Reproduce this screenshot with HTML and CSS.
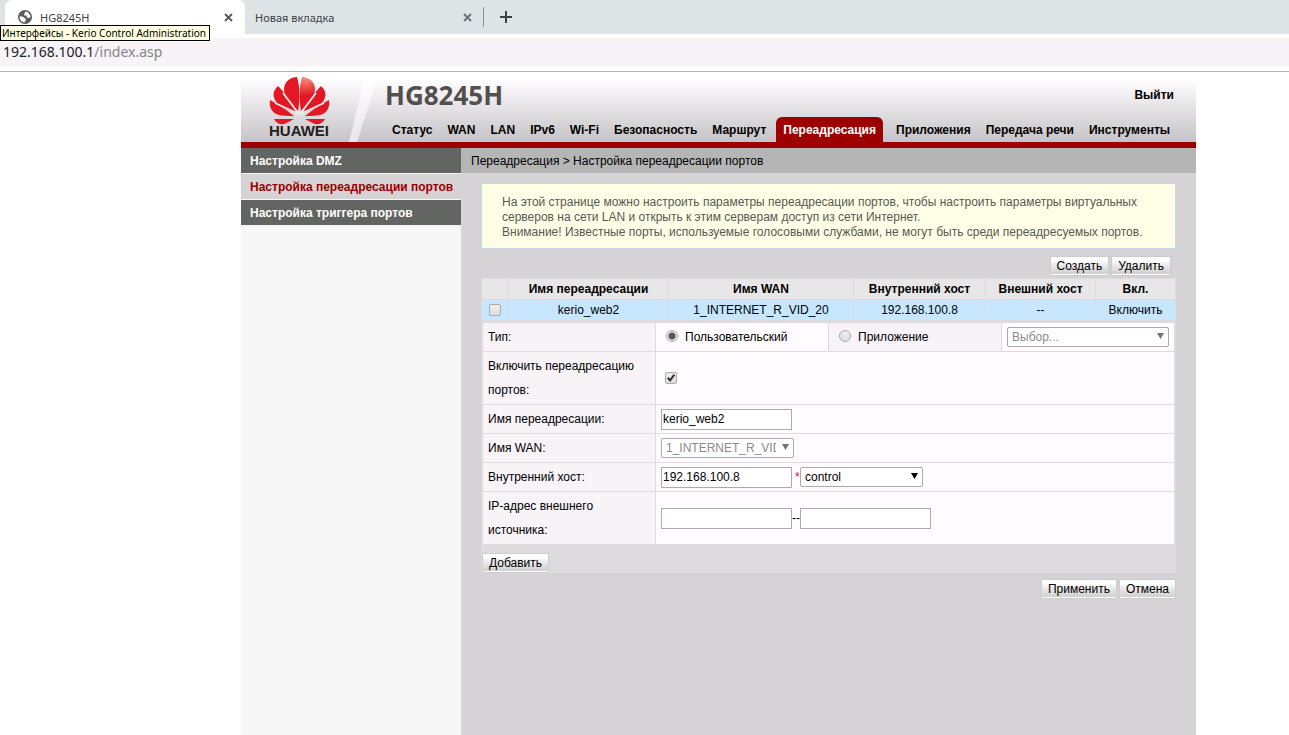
FILE: index.html
```
<!DOCTYPE html>
<html lang="ru">
<head>
<meta charset="utf-8">
<title>HG8245H</title>
<link rel="stylesheet" href="styles.css">
</head>
<body>
<header class="browser">
  <div class="tabs">
    <div class="tab tab-active">
      <svg class="globe" viewBox="0 0 14 14" aria-hidden="true"><circle cx="7" cy="7" r="7" fill="#5a5e63"/><path d="M1.500 6.500 4.500 6.500 6.500 8 8 9 7.500 10.500 6.500 12.500C3.500 12 1.500 10 1.500 6.500ZM7.500 1.500C10 1.800 12.300 4 12.500 7L11 8 9 7.500 8.500 5.500 6 5.500 6.500 3.500Z" fill="#fff"/></svg>
      <span class="tab-title">HG8245H</span>
      <button class="tab-close" type="button" aria-label="Закрыть"><svg viewBox="0 0 9 9"><path d="M1 1 8 8M8 1 1 8" stroke="#54585c" stroke-width="1.800"/></svg></button>
    </div>
    <div class="tab tab-next">
      <span class="tab-title">Новая вкладка</span>
      <button class="tab-close" type="button" aria-label="Закрыть"><svg viewBox="0 0 9 9"><path d="M1 1 8 8M8 1 1 8" stroke="#6b6f73" stroke-width="1.800"/></svg></button>
    </div>
    <button class="tab-new" type="button" aria-label="Новая вкладка"><svg viewBox="0 0 12 12"><path d="M6 0V12M0 6H12" stroke="#3c4043" stroke-width="2"/></svg></button>
  </div>
  <div class="address">192.168.100.1<span class="path">/index.asp</span></div>
  <div class="tooltip" role="tooltip">Интерфейсы - Kerio Control Administration</div>
</header>

<div class="router">
  <div class="banner">
    <svg class="logo" viewBox="0 0 134 64" role="img" aria-label="HUAWEI">
      <defs>
        <radialGradient id="petal" gradientUnits="userSpaceOnUse" cx="65" cy="-2" r="20">
          <stop offset="0" stop-color="#f4a090"/><stop offset="0.500" stop-color="#ec5a50"/><stop offset="1" stop-color="#e31824"/>
        </radialGradient>
        <linearGradient id="slash" x1="0" y1="0" x2="0" y2="1">
          <stop offset="0" stop-color="#fff"/><stop offset="1" stop-color="#e8e6e8"/>
        </linearGradient>
      </defs>
      <path d="M123 2H136L116 64H108Z" fill="url(#slash)"/>
      <g>
        <g fill="#e31824">
          <path d="M57 33C59 23 59 8 56 -1C49 -1 43 4 43 11C43 19 50 27 57 33Z"/>
          <path d="M55 35C51 25 44 15 37 8C33 12 31 16 34 22C37 28 46 32 55 35Z"/>
          <path d="M53 38C46 32 38 27 29 22C28 28 30 33 35 36C40 38 47 38 53 38Z"/>
          <path d="M53 41H33C35 45 39 47 43 46C47 44 50 43 53 41Z"/>
        </g>
        <g fill="url(#petal)">
          <path d="M60 33C58 23 58 8 61 -1C68 -1 74 4 74 11C74 19 67 27 60 33Z"/>
          <path d="M62 35C66 25 73 15 80 8C84 12 86 16 83 22C80 28 71 32 62 35Z"/>
          <path d="M64 38C71 32 79 27 88 22C89 28 87 33 82 36C77 38 70 38 64 38Z"/>
          <path d="M64 41H84C82 45 78 47 74 46C70 44 67 43 64 41Z"/>
        </g>
        <path d="M58 36 42 15M58 36 34 25M59 36 75 15M59 36 83 25" stroke="#eeecee" stroke-width="1.800" fill="none"/>
      </g>
      <text x="28" y="58" class="logo-text">HUAWEI</text>
    </svg>
    <div class="banner-main">
      <div class="banner-top">
        <h1 class="model">HG8245H</h1>
        <a class="logout" href="#">Выйти</a>
      </div>
      <nav class="nav">
        <a href="#">Статус</a><a href="#">WAN</a><a href="#">LAN</a><a href="#">IPv6</a><a href="#">Wi-Fi</a><a href="#">Безопасность</a><a href="#">Маршрут</a><a class="current" href="#">Переадресация</a><a href="#">Приложения</a><a href="#">Передача речи</a><a href="#">Инструменты</a>
      </nav>
    </div>
  </div>

  <div class="body">
    <nav class="side">
      <a href="#">Настройка DMZ</a>
      <a class="selected" href="#">Настройка переадресации портов</a>
      <a href="#">Настройка триггера портов</a>
    </nav>
    <main class="main">
      <div class="crumbs">Переадресация &gt; Настройка переадресации портов</div>
      <form class="content">
        <p class="note">На этой странице можно настроить параметры переадресации портов, чтобы настроить параметры виртуальных серверов на сети LAN и открыть к этим серверам доступ из сети Интернет.<br>Внимание! Известные порты, используемые голосовыми службами, не могут быть среди переадресуемых портов.</p>
        <div class="actions actions-top">
          <button class="btn" type="button">Создать</button>
          <button class="btn" type="button">Удалить</button>
        </div>
        <table class="list">
          <colgroup><col class="c-check"><col class="c-name"><col class="c-wan"><col class="c-in"><col class="c-out"><col></colgroup>
          <thead><tr><th></th><th>Имя переадресации</th><th>Имя WAN</th><th>Внутренний хост</th><th>Внешний хост</th><th>Вкл.</th></tr></thead>
          <tbody><tr><td><input class="check" type="checkbox" aria-label="kerio_web2"></td><td>kerio_web2</td><td>1_INTERNET_R_VID_20</td><td>192.168.100.8</td><td>--</td><td>Включить</td></tr></tbody>
        </table>
        <div class="config">
          <table class="fields">
            <tbody>
              <tr>
                <th scope="row">Тип:</th>
                <td><label class="choice"><input class="radio" type="radio" name="type" checked>Пользовательский</label></td>
                <td class="tint"><label class="choice"><input class="radio" type="radio" name="type">Приложение</label></td>
                <td><span class="select select-wide off"><select disabled aria-label="Приложение"><option>Выбор...</option></select><svg viewBox="0 0 8 6"><path d="M0 0H7L3.500 6Z"/></svg></span></td>
              </tr>
              <tr>
                <th scope="row"><label for="enable">Включить переадресацию портов:</label></th>
                <td class="inset" colspan="3"><input id="enable" class="check" type="checkbox" checked></td>
              </tr>
              <tr>
                <th scope="row"><label for="name">Имя переадресации:</label></th>
                <td colspan="3"><input id="name" class="text" type="text" value="kerio_web2"></td>
              </tr>
              <tr>
                <th scope="row"><label for="wan">Имя WAN:</label></th>
                <td colspan="3"><span class="select select-wan off"><select id="wan" disabled><option>1_INTERNET_R_VID_20</option></select><svg viewBox="0 0 8 6"><path d="M0 0H7L3.500 6Z"/></svg></span></td>
              </tr>
              <tr>
                <th scope="row"><label for="host">Внутренний хост:</label></th>
                <td colspan="3"><div class="pair"><input id="host" class="text" type="text" value="192.168.100.8"><span class="star">*</span><span class="select select-host"><select aria-label="Хост"><option>control</option></select><svg viewBox="0 0 8 6"><path d="M0 0H7L3.500 6Z"/></svg></span></div></td>
              </tr>
              <tr>
                <th scope="row"><label for="from">IP-адрес внешнего источника:</label></th>
                <td colspan="3"><div class="pair"><input id="from" class="text" type="text"><span class="dash">--</span><input class="text" type="text" aria-label="Конечный IP-адрес"></div></td>
              </tr>
            </tbody>
          </table>
          <button class="btn btn-add" type="button">Добавить</button>
        </div>
        <div class="actions actions-bottom">
          <button class="btn" type="submit">Применить</button>
          <button class="btn" type="reset">Отмена</button>
        </div>
      </form>
    </main>
  </div>
</div>
</body>
</html>
```

FILE: styles.css
```
* { box-sizing: border-box; }
body {
  margin: 0;
  min-height: 100vh;
  display: flex;
  flex-direction: column;
  background: #fff;
  color: #000;
  font: 12px/15px "Liberation Sans", Arial, sans-serif;
}
a { color: inherit; text-decoration: none; }
button { font: inherit; cursor: pointer; }

/* Browser chrome */
.browser {
  position: relative;
  border-bottom: 1px solid #b3b1b3;
  font-family: "Noto Sans", "Open Sans", sans-serif;
}
.tabs { display: flex; height: 38px; padding-bottom: 4px; background: linear-gradient(#dee3e6 34px, #fff 34px); }
.tab { display: flex; align-items: center; font-size: 11px; color: #3f4245; }
.tab-active { width: 240px; margin: 0 0 -4px 5px; padding: 0 12px 4px 13px; border-radius: 7px 7px 0 0; background: #fff; }
.tab-next { width: 239px; padding: 0 11px 0 10px; border-bottom-left-radius: 8px; background: #dee3e6; position: relative; }
.tab-next::after { content: ""; position: absolute; right: 0; top: 7px; width: 1px; height: 20px; background: #8e9194; }
.globe { width: 14px; height: 14px; margin-right: 8px; }
.tab-title { flex: 1; }
.tab-close, .tab-new { border: 0; padding: 0; background: none; display: flex; align-items: center; }
.tab-close svg { width: 9px; height: 9px; }
.tab-next .tab-close { margin-right: 1px; }
.tab-new { margin-left: 16px; }
.tab-new svg { width: 12px; height: 12px; }
.address {
  height: 33px;
  padding-left: 3px;
  background: linear-gradient(#f7f3f7 28px, #fff 28px);
  color: #202124;
  font-size: 14px;
  line-height: 28px;
}
.path { color: #85858a; }
.tooltip {
  position: absolute;
  left: 0;
  top: 25px;
  padding: 0 3px 0 1px;
  border: 1px solid #000;
  background: #ffffe1;
  color: #000;
  font-size: 10px;
  line-height: 14px;
  white-space: nowrap;
}

/* Router page */
.router { flex: 1; display: flex; flex-direction: column; margin: 6px 93px 0 241px; }
.banner {
  display: flex;
  height: 70px;
  border-bottom: 6px solid #9c0000;
  background: linear-gradient(#fff, #fcfafc 5px, #c5c3c5);
}
.logo { width: 134px; height: 64px; flex: none; overflow: visible; }
.logo-text { font: bold 15px "Liberation Sans", Arial, sans-serif; fill: #231f20; }
.banner-main { flex: 1; display: flex; flex-direction: column; justify-content: space-between; }
.banner-top { display: flex; justify-content: space-between; padding: 0 22px 0 10px; }
.model { margin: 0; color: #524f4f; font: bold 26px/34px "Noto Sans", "Open Sans", sans-serif; }
.logout { padding-top: 10px; font-weight: bold; }
.nav { display: flex; gap: 1px; padding-left: 10px; font-weight: bold; white-space: nowrap; }
.nav a { padding: 2px 7px 0; line-height: 23px; }
.nav a.current { margin: 0 5px 0 2px; border-radius: 6px 6px 0 0; background: #9c0000; color: #fff; }

.body { flex: 1; display: flex; }
.side { width: 220px; background: #f7f7f7; }
.side a {
  display: block;
  height: 26px;
  padding: 2px 0 0 9px;
  border-bottom: 1px solid #f7f7f7;
  background: #636562;
  color: #fff;
  font-weight: bold;
  line-height: 23px;
}
.side a.selected { background: #d6d3d6; color: #9c0000; }
.main { flex: 1; background: #d6d3d6; }
.crumbs { padding: 2px 0 0 10px; background: #b5b5b5; line-height: 23px; }
.content { padding: 10px 20px 0; }
.note { margin: 0; padding: 11px 19px 8px 20px; border: 1px solid #c6dbe7; background: #ffffe7; color: #5a5952; }
.actions { display: flex; justify-content: flex-end; gap: 2px; }
.actions-top { padding: 7px 5px 2px; }
.actions-bottom { padding-top: 5px; }
.btn {
  height: 20px;
  padding: 1px 6px 0;
  border: 1px solid #cecbce;
  background: linear-gradient(#fff 4px, #f2f2f2 6px, #cfcfcf 17px, #fff 17px);
  color: #000;
  line-height: 17px;
}
.btn-add { display: block; margin: 8px 0 1px; }

.list { width: 100%; border-collapse: collapse; table-layout: fixed; text-align: center; background: #e7e7e7; }
.list th, .list td { height: 21px; padding: 0; border: 1px solid #dedbde; }
.list tbody { background: #c6e7ff; }
.list .check { display: block; margin: 0 auto; }
.c-check { width: 27px; }
.c-name { width: 160px; }
.c-wan { width: 185px; }
.c-in { width: 132px; }
.c-out { width: 110px; }

.config { padding: 1px 1px 0; background: #dedbde; }
.fields { width: 100%; border-collapse: collapse; table-layout: fixed; background: #fffbff; }
.fields th, .fields td { height: 29px; padding: 0 5px; border: 1px solid #dedbde; text-align: left; font-weight: normal; }
.fields th, .fields .tint { background: #f7f3f7; }
.fields th { line-height: 24px; padding-top: 2px; padding-bottom: 2px; }
.fields .inset { padding-left: 9px; }
.choice { display: flex; gap: 7px; padding-left: 5px; }
.pair { display: flex; align-items: center; }

.check, .radio { appearance: none; margin: 0; width: 12px; height: 12px; border: 1px solid #aaa; background: linear-gradient(#eee, #ddd); }
.check { display: block; border-radius: 2px; }
.check:checked::before {
  content: "";
  display: block;
  width: 10px;
  height: 10px;
  background: #333;
  clip-path: polygon(10% 55%, 25% 40%, 40% 58%, 75% 10%, 92% 22%, 42% 90%);
}
.radio { flex: none; border-radius: 50%; }
.radio:checked { background: radial-gradient(circle, #555 3px, #e6e6e6 4px); }
.text { display: block; width: 131px; height: 21px; padding: 0 1px; border: 1px solid #adaaad; background: #fff; font: inherit; }
.select { position: relative; display: block; height: 20px; }
.select select {
  appearance: none;
  display: block;
  width: 100%;
  height: 100%;
  padding: 0 17px 0 4px;
  border: 1px solid #adaaad;
  border-radius: 2px;
  background: #fff;
  color: #000;
  font: inherit;
  opacity: 1;
}
.select svg { position: absolute; right: 4px; top: 6px; width: 8px; height: 6px; pointer-events: none; }
.off select { color: #8c8a8c; }
.off svg { fill: #737373; }
.select-wan { width: 133px; }
.select-host { width: 123px; }
.star { width: 8px; padding-left: 3px; color: #e0103a; }
.dash { width: 8px; }
```
